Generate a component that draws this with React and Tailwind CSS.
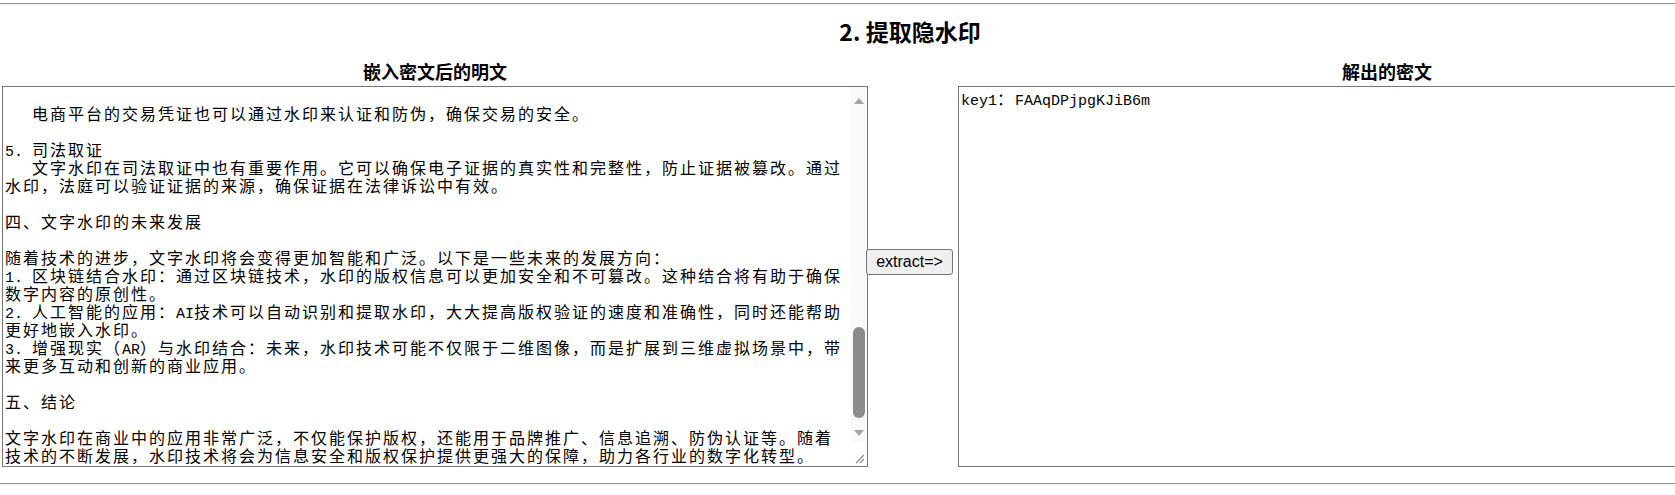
const plainText = `文字水印在商业中的应用

一、引言

随着数字化时代的到来，信息的传播速度越来越快，数字内容的复制和传播也变得越来越容易。如何保护数字内容的版权、防止信息被非法篡改和盗用，成为了企业和个人共同关注的问题。文字水印作为一种信息隐藏技术，能够在不影响文本正常阅读的前提下，将版权信息、身份标识等内容嵌入到文本中，为数字内容的保护提供了有效的手段。

二、文字水印的基本原理

文字水印是指在文本中嵌入特定的标识信息，这些信息通常是不可见的，只有通过特定的算法才能提取出来。常见的文字水印技术包括：
1. 基于格式的水印：通过调整字间距、行间距、字体等格式信息来嵌入水印。
2. 基于语义的水印：通过同义词替换、句式变换等方式来嵌入水印。
3. 基于零宽字符的水印：在文本中插入零宽空格、零宽连接符等不可见字符来嵌入水印。

三、文字水印在商业中的应用

1. 版权保护
   对于出版社、新闻媒体、网络文学平台等内容提供商来说，版权保护是最重要的问题之一。通过在文章中嵌入文字水印，可以在发生侵权时快速追溯到泄露源头，为维权提供有力的证据。

2. 品牌推广
   企业可以在发布的文案、广告和宣传资料中嵌入品牌标识，当这些内容被转载和传播时，企业可以追踪内容的传播路径，了解品牌的影响范围。

3. 信息追溯
   在企业内部，机密文件的泄露会给企业带来巨大的损失。通过为每一位员工分发带有不同水印的文件，一旦文件外泄，企业就可以迅速定位泄密者，从而加强内部信息安全管理。

4. 防伪认证
   在合同、证书、票据等重要文件中嵌入文字水印，可以有效防止文件被伪造和篡改。接收方可以通过提取水印来验证文件的真实性。

   电商平台的交易凭证也可以通过水印来认证和防伪，确保交易的安全。

5. 司法取证
   文字水印在司法取证中也有重要作用。它可以确保电子证据的真实性和完整性，防止证据被篡改。通过水印，法庭可以验证证据的来源，确保证据在法律诉讼中有效。

四、文字水印的未来发展

随着技术的进步，文字水印将会变得更加智能和广泛。以下是一些未来的发展方向：
1. 区块链结合水印：通过区块链技术，水印的版权信息可以更加安全和不可篡改。这种结合将有助于确保数字内容的原创性。
2. 人工智能的应用：AI技术可以自动识别和提取水印，大大提高版权验证的速度和准确性，同时还能帮助更好地嵌入水印。
3. 增强现实（AR）与水印结合：未来，水印技术可能不仅限于二维图像，而是扩展到三维虚拟场景中，带来更多互动和创新的商业应用。

五、结论

文字水印在商业中的应用非常广泛，不仅能保护版权，还能用于品牌推广、信息追溯、防伪认证等。随着技术的不断发展，水印技术将会为信息安全和版权保护提供更强大的保障，助力各行业的数字化转型。`;

const secretText = "key1：FAAqDPjpgKJiB6m";

// ascii runs keep the mono advance (and no say in line height), cjk gets the wide cell
function MonoText({ text }) {
  return text.split(/([\x00-\x7F]+)/).map((part, i) =>
    /^[\x00-\x7F]+$/.test(part) ? (
      <span key={i} className="font-['Liberation_Mono',monospace] text-[15px] leading-[0px]">
        {part}
      </span>
    ) : (
      <span key={i} className="tracking-[2px]">
        {part}
      </span>
    )
  );
}

function ScrollBar() {
  return (
    <div className="flex w-[16px] shrink-0 flex-col bg-[#f9f9f9]">
      <div className="flex h-[26px] items-center justify-center pt-[2px]">
        <svg width="10" height="6" viewBox="0 0 10 6">
          <path d="M5 0 L10 6 L0 6 Z" fill="#a3a3a3" />
        </svg>
      </div>
      <div className="flex flex-1 flex-col justify-end px-[2px] pb-[6px]">
        <div className="h-[91px] rounded-full bg-[#8c8c8c]" />
      </div>
      <div className="flex h-[18px] items-center justify-center">
        <svg width="10" height="6" viewBox="0 0 10 6">
          <path d="M0 0 L10 0 L5 6 Z" fill="#a3a3a3" />
        </svg>
      </div>
      <div className="flex h-[24px] items-end justify-end bg-white p-[2px]">
        <svg width="12" height="12" viewBox="0 0 12 12">
          <path d="M11 3 L3 11 M11 7 L7 11" stroke="#8a8a8a" strokeWidth="1.2" />
        </svg>
      </div>
    </div>
  );
}

function TextBox({ text, withScroll, className = "" }) {
  return (
    <div className={`flex h-[381px] border border-[#767676] bg-white ${className}`}>
      <div className={`flex min-w-0 flex-1 flex-col overflow-hidden p-[2px] ${withScroll ? "justify-end" : "justify-start"}`}>
        <div className="whitespace-pre-wrap break-all font-['Noto_Sans_CJK_SC',monospace] text-[16px] leading-[18px] text-black">
          <MonoText text={text} />
        </div>
      </div>
      {withScroll && <ScrollBar />}
    </div>
  );
}

export default function App() {
  return (
    <div className="w-[1820px] bg-white font-['Noto_Sans_CJK_SC','Liberation_Sans',sans-serif] text-black">
      <div className="mt-[3px] border-t border-b border-t-[#9a9a9a] border-b-[#eeeeee]" />

      <h2 className="mt-[7px] h-[38px] text-center text-[23px] font-bold leading-[38px]">2. 提取隐水印</h2>

      <div className="flex items-start">
        <div className="ml-[2px] flex w-[866px] flex-col">
          <div className="mt-[9px] h-[24px] text-center text-[18px] font-bold leading-[24px]">嵌入密文后的明文</div>
          <TextBox text={plainText} withScroll className="mt-[3px]" />
        </div>

        <button className="relative z-10 -ml-[2px] mt-[199px] h-[26px] w-[87px] rounded-[3px] border border-[#767676] bg-[#efefef] font-['Liberation_Sans',sans-serif] text-[16px] leading-none text-black">
          extract=&gt;
        </button>

        <div className="ml-[5px] flex w-[858px] flex-col">
          <div className="mt-[9px] h-[24px] text-center text-[18px] font-bold leading-[24px]">解出的密文</div>
          <TextBox text={secretText} className="mt-[3px]" />
        </div>
      </div>

      <div className="mt-[16px] border-t border-b border-t-[#9a9a9a] border-b-[#eeeeee]" />
    </div>
  );
}
